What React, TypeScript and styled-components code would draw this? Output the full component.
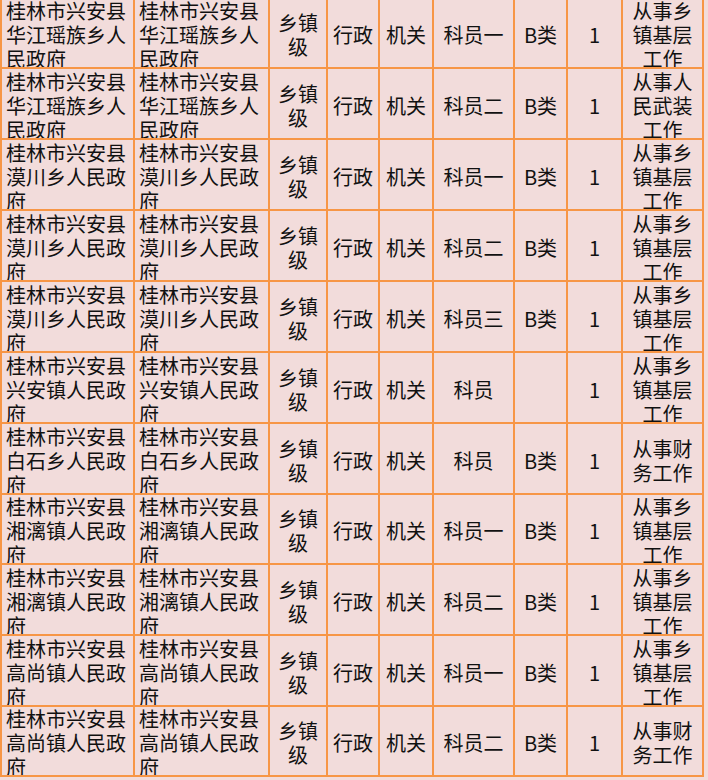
import React from 'react';
import styled, { createGlobalStyle } from 'styled-components';

const GlobalStyle = createGlobalStyle`
  html, body {
    margin: 0;
    padding: 0;
    background: #f2dcdb;
  }
  body {
    font-family: "Noto Sans CJK SC", "Liberation Sans", sans-serif;
    color: #111;
  }
`;

const Viewport = styled.div`
  width: 708px;
  height: 780px;
  overflow: hidden;
`;

const Grid = styled.div<{ $rows: string }>`
  display: grid;
  grid-template-columns: 131px 133px 56px 50px 52px 79px 51px 53px 79px;
  grid-template-rows: ${(p) => p.$rows};
  gap: 2px;
  padding: 2px;
  width: fit-content;
  margin-top: -4px;
  background: #f79646;
`;

const Cell = styled.div<{ $align: 'left' | 'center' }>`
  display: flex;
  align-items: center;
  justify-content: ${(p) => (p.$align === 'left' ? 'flex-start' : 'center')};
  text-align: ${(p) => p.$align};
  padding: ${(p) => (p.$align === 'left' ? '4px 0 0 4px' : '4px 0 0 0')};
  box-sizing: border-box;
  overflow: hidden;
  background: #f2dcdb;
  font-size: 20px;
  line-height: 24px;
`;

const CellText = styled.div`
  width: 100%;
  word-break: break-all;
`;

type Row = {
  unit: string;
  level: string;
  post: string;
  cls: string;
  duty: string;
};

const rows: Row[] = [
  { unit: '桂林市兴安县华江瑶族乡人民政府', level: '乡镇级', post: '科员一', cls: 'B类', duty: '从事乡镇基层工作' },
  { unit: '桂林市兴安县华江瑶族乡人民政府', level: '乡镇级', post: '科员二', cls: 'B类', duty: '从事人民武装工作' },
  { unit: '桂林市兴安县漠川乡人民政府', level: '乡镇级', post: '科员一', cls: 'B类', duty: '从事乡镇基层工作' },
  { unit: '桂林市兴安县漠川乡人民政府', level: '乡镇级', post: '科员二', cls: 'B类', duty: '从事乡镇基层工作' },
  { unit: '桂林市兴安县漠川乡人民政府', level: '乡镇级', post: '科员三', cls: 'B类', duty: '从事乡镇基层工作' },
  { unit: '桂林市兴安县兴安镇人民政府', level: '乡镇级', post: '科员', cls: '', duty: '从事乡镇基层工作' },
  { unit: '桂林市兴安县白石乡人民政府', level: '乡镇级', post: '科员', cls: 'B类', duty: '从事财务工作' },
  { unit: '桂林市兴安县湘漓镇人民政府', level: '乡镇级', post: '科员一', cls: 'B类', duty: '从事乡镇基层工作' },
  { unit: '桂林市兴安县湘漓镇人民政府', level: '乡镇级', post: '科员二', cls: 'B类', duty: '从事乡镇基层工作' },
  { unit: '桂林市兴安县高尚镇人民政府', level: '乡镇级', post: '科员一', cls: 'B类', duty: '从事乡镇基层工作' },
  { unit: '桂林市兴安县高尚镇人民政府', level: '乡镇级', post: '科员二', cls: 'B类', duty: '从事财务工作' },
];

// row heights follow the spreadsheet's uneven pitch
const rowHeights = [69, 69, 69, 69, 69, 69, 69, 68, 69, 69, 68];

export default function App() {
  return (
    <>
      <GlobalStyle />
      <Viewport>
        <Grid $rows={rowHeights.map((h) => `${h}px`).join(' ')}>
          {rows.map((r, i) => (
            <React.Fragment key={i}>
              <Cell $align="left"><CellText>{r.unit}</CellText></Cell>
              <Cell $align="left"><CellText>{r.unit}</CellText></Cell>
              <Cell $align="center"><CellText>{r.level}</CellText></Cell>
              <Cell $align="center"><CellText>行政</CellText></Cell>
              <Cell $align="center"><CellText>机关</CellText></Cell>
              <Cell $align="center"><CellText>{r.post}</CellText></Cell>
              <Cell $align="center"><CellText>{r.cls}</CellText></Cell>
              <Cell $align="center"><CellText>1</CellText></Cell>
              <Cell $align="center"><CellText>{r.duty}</CellText></Cell>
            </React.Fragment>
          ))}
        </Grid>
      </Viewport>
    </>
  );
}
